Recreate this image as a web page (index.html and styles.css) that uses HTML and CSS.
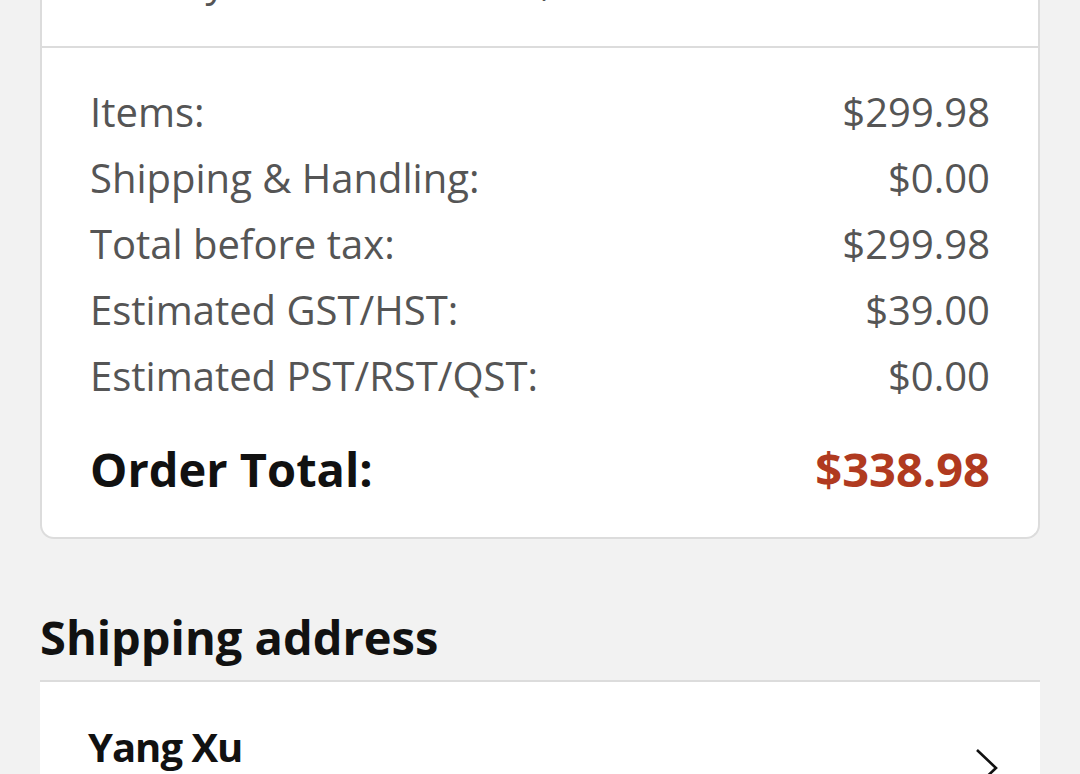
FILE: index.html
```html
<!DOCTYPE html>
<html lang="en">
<head>
	<meta charset="utf-8">
	<title>Order summary</title>
	<link rel="stylesheet" href="styles.css">
</head>
<body>
	<div class="page">
		<div class="card">
			<div class="card-top">
				<p class="seller">Sold by: Amazon.com.ca, Inc.</p>
			</div>
			<div class="summary">
				<div class="row"><span>Items:</span><span>$299.98</span></div>
				<div class="row"><span>Shipping &amp; Handling:</span><span>$0.00</span></div>
				<div class="row"><span>Total before tax:</span><span>$299.98</span></div>
				<div class="row"><span>Estimated GST/HST:</span><span>$39.00</span></div>
				<div class="row"><span>Estimated PST/RST/QST:</span><span>$0.00</span></div>
				<div class="row total"><span>Order Total:</span><span class="price">$338.98</span></div>
			</div>
		</div>

		<h2 class="section-title">Shipping address</h2>
		<div class="address">
			<div class="address-row">
				<span class="name">Yang Xu</span>
				<svg class="chevron" width="26" height="40" viewBox="0 0 26 40">
					<path d="M3 3 L22 21 L3 39" fill="none" stroke="#111" stroke-width="2.6"/>
				</svg>
			</div>
		</div>
	</div>
</body>
</html>
```

FILE: styles.css
```css
body{
	margin: 0;
	background: #f2f2f2;
	font-family: "Open Sans", "Noto Sans", sans-serif;
	color: #111;
	overflow: hidden;
}
.page{
	padding: 0 40px;
}
.card{
	background: #fff;
	border: 2px solid #dcdcdc;
	border-top: none;
	border-radius: 0 0 14px 14px;
}
.card-top{
	height: 46px;
	border-bottom: 2px solid #dcdcdc;
	overflow: hidden;
}
.seller{
	margin: -44px 0 0 48px;
	font-size: 40px;
	line-height: 50px;
	color: #555;
}
.summary{
	padding: 31px 48px 35px 48px;
}
.row{
	display: flex;
	justify-content: space-between;
	font-size: 40px;
	line-height: 66px;
	color: #555;
}
.row.total{
	margin-top: 27px;
	font-size: 47px;
	font-weight: 700;
	color: #111;
}
.price{
	color: #b03a20;
}
.section-title{
	margin: 68px 0 13px 0;
	font-size: 47px;
	line-height: 60px;
	font-weight: 700;
}
.address{
	background: #fff;
	border-top: 2px solid #dcdcdc;
	height: 200px;
}
.address-row{
	display: flex;
	justify-content: space-between;
	align-items: flex-start;
	padding: 40px 40px 0 48px;
}
.name{
	font-size: 40px;
	line-height: 50px;
	font-weight: 700;
	letter-spacing: -1px;
}
.chevron{
	margin-top: 25px;
}
```
